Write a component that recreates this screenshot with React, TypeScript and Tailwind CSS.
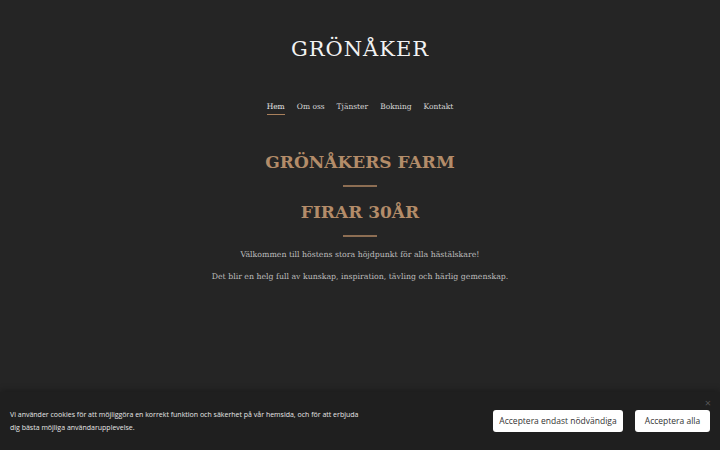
import React from "react";

const slab = { fontFamily: '"DejaVu Serif", "Liberation Serif", serif' };

const links = ["Hem", "Om oss", "Tjänster", "Bokning", "Kontakt"];

export default function App() {
  return (
    <div className="relative h-[450px] w-[720px] overflow-hidden bg-[#252525]" style={slab}>
      <header className="flex flex-col items-center pt-[34px]">
        <h1 className="text-[21px] font-normal leading-[30px] tracking-[1px] text-[#f2f2f2]">GRÖNÅKER</h1>
        <nav className="mt-[37px] flex gap-[12px] text-[7.5px] text-[#d6d6d6]">
          {links.map((l, i) => (
            <a key={l} className={i === 0 ? "border-b border-[#a9805c] pb-[2px] text-[#e8e8e8]" : "pb-[2px]"}>
              {l}
            </a>
          ))}
        </nav>
      </header>

      <main className="mt-[34px] flex flex-col items-center">
        <h2 className="text-[17px] font-bold leading-[26px] text-[#b38c69]">GRÖNÅKERS FARM</h2>
        <div className="mt-[10px] h-[2px] w-[34px] bg-[#8d6e53]" />
        <h2 className="mt-[12px] text-[17px] font-bold leading-[26px] text-[#b38c69]">FIRAR 30ÅR</h2>
        <div className="mt-[10px] h-[2px] w-[34px] bg-[#8d6e53]" />
        <p className="mt-[11px] text-[7.8px] leading-[14px] text-[#bdbdbd]">
          Välkommen till höstens stora höjdpunkt för alla hästälskare!
        </p>
        <p className="mt-[8px] text-[7.8px] leading-[14px] text-[#bdbdbd]">
          Det blir en helg full av kunskap, inspiration, tävling och härlig gemenskap.
        </p>
      </main>

      <div
        className="absolute bottom-0 left-0 flex h-[58px] w-full items-center justify-between bg-[#1f1f1f] pl-[10px] pr-[10px] shadow-[0_-2px_6px_rgba(0,0,0,0.25)]"
        style={{ fontFamily: '"Open Sans", "Liberation Sans", sans-serif' }}
      >
        <p className="w-[356px] text-[7px] leading-[13px] text-[#e6e6e6]">
          Vi använder cookies för att möjliggöra en korrekt funktion och säkerhet på vår hemsida, och för att erbjuda
          dig bästa möjliga användarupplevelse.
        </p>
        <div className="flex gap-[12px]">
          <button className="h-[22px] w-[130px] rounded-[3px] bg-white text-[8.5px] text-[#333]">
            Acceptera endast nödvändiga
          </button>
          <button className="h-[22px] w-[75px] rounded-[3px] bg-white text-[8.5px] text-[#333]">
            Acceptera alla
          </button>
        </div>
        <span className="absolute right-[9px] top-[5px] text-[11px] leading-none text-[#555]">×</span>
      </div>
    </div>
  );
}
